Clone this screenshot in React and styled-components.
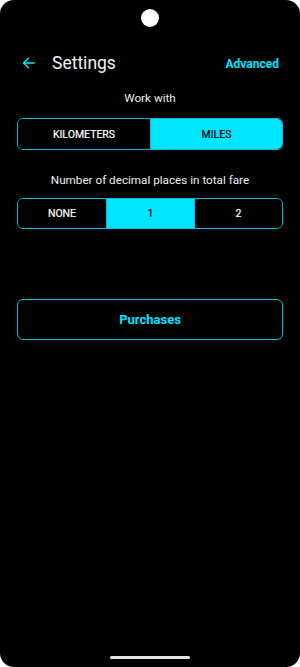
import React, { useState } from "react";
import styled, { createGlobalStyle } from "styled-components";

const Global = createGlobalStyle`
  html, body { margin: 0; padding: 0; background: #fff; }
  body { font-family: Roboto, "Noto Sans", sans-serif; }
  * { box-sizing: border-box; }
`;

const Phone = styled.div`
  width: 300px;
  height: 667px;
  background: #000;
  border-radius: 14px;
  position: relative;
  overflow: hidden;
  display: flex;
  flex-direction: column;
  color: #fff;
`;

const Camera = styled.div`
  position: absolute;
  left: 141px;
  top: 9px;
  width: 18px;
  height: 18px;
  border-radius: 50%;
  background: #fff;
`;

const Header = styled.div`
  display: flex;
  align-items: center;
  height: 30px;
  margin-top: 48px;
  padding: 0 21px 0 21px;
`;

const BackBtn = styled.button`
  background: none;
  border: none;
  padding: 0;
  width: 16px;
  height: 16px;
  display: flex;
  align-items: center;
  justify-content: center;
  margin-right: 15px;
  cursor: pointer;
`;

const Title = styled.div`
  font-size: 17.5px;
  color: #f2f2f2;
  flex: 1;
`;

const Advanced = styled.div`
  font-size: 12px;
  font-weight: 700;
  color: #00e5ff;
  padding-top: 1px;
`;

const Content = styled.div`
  display: flex;
  flex-direction: column;
  padding: 0 17px;
`;

const Label = styled.div`
  font-size: 11.7px;
  color: #eee;
  text-align: center;
  margin-top: ${(p) => p.$mt}px;
  margin-bottom: ${(p) => p.$mb}px;
`;

const Segmented = styled.div`
  display: grid;
  grid-template-columns: repeat(${(p) => p.$count}, 1fr);
  height: ${(p) => p.$h}px;
  border: 1.5px solid #00bcd4;
  border-radius: 6px;
  overflow: hidden;
`;

const Segment = styled.div`
  display: flex;
  align-items: center;
  justify-content: center;
  font-size: 10.5px;
  font-weight: 400;
  color: ${(p) => (p.$active ? "#000" : "#fff")};
  background: ${(p) => (p.$active ? "#00e5ff" : "#000")};
  -webkit-text-stroke: 0.2px currentColor;
  & + & {
    border-left: ${(p) => (p.$divider ? "1.5px solid #00bcd4" : "none")};
  }
`;

const Purchases = styled.button`
  margin-top: 70px;
  height: 41px;
  border: 1.5px solid #00bcd4;
  border-radius: 6px;
  background: #000;
  color: #00e5ff;
  font-family: Roboto, "Noto Sans", sans-serif;
  font-size: 13px;
  font-weight: 700;
  cursor: pointer;
`;

const HomeBar = styled.div`
  position: absolute;
  left: 110px;
  bottom: 8px;
  width: 80px;
  height: 3px;
  border-radius: 2px;
  background: #e6e6e6;
`;

export default function App() {
  const [unit, setUnit] = useState("MILES");
  const [dec, setDec] = useState("1");
  return (
    <>
      <Global />
      <Phone>
        <Camera />
        <Header>
          <BackBtn aria-label="Back">
            <svg width="14" height="14" viewBox="0 0 24 24" fill="none" stroke="#00e5ff" strokeWidth="2.6" strokeLinecap="round" strokeLinejoin="round">
              <path d="M21 12H3" />
              <path d="M11 4l-8 8 8 8" />
            </svg>
          </BackBtn>
          <Title>Settings</Title>
          <Advanced>Advanced</Advanced>
        </Header>
        <Content>
          <Label $mt={13} $mb={13}>Work with</Label>
          <Segmented $count={2} $h={32}>
            {["KILOMETERS", "MILES"].map((u) => (
              <Segment key={u} $active={unit === u} onClick={() => setUnit(u)}>
                {u}
              </Segment>
            ))}
          </Segmented>
          <Label $mt={23} $mb={11}>Number of decimal places in total fare</Label>
          <Segmented $count={3} $h={31}>
            {["NONE", "1", "2"].map((d) => (
              <Segment key={d} $divider $active={dec === d} onClick={() => setDec(d)}>
                {d}
              </Segment>
            ))}
          </Segmented>
          <Purchases>Purchases</Purchases>
        </Content>
        <HomeBar />
      </Phone>
    </>
  );
}
